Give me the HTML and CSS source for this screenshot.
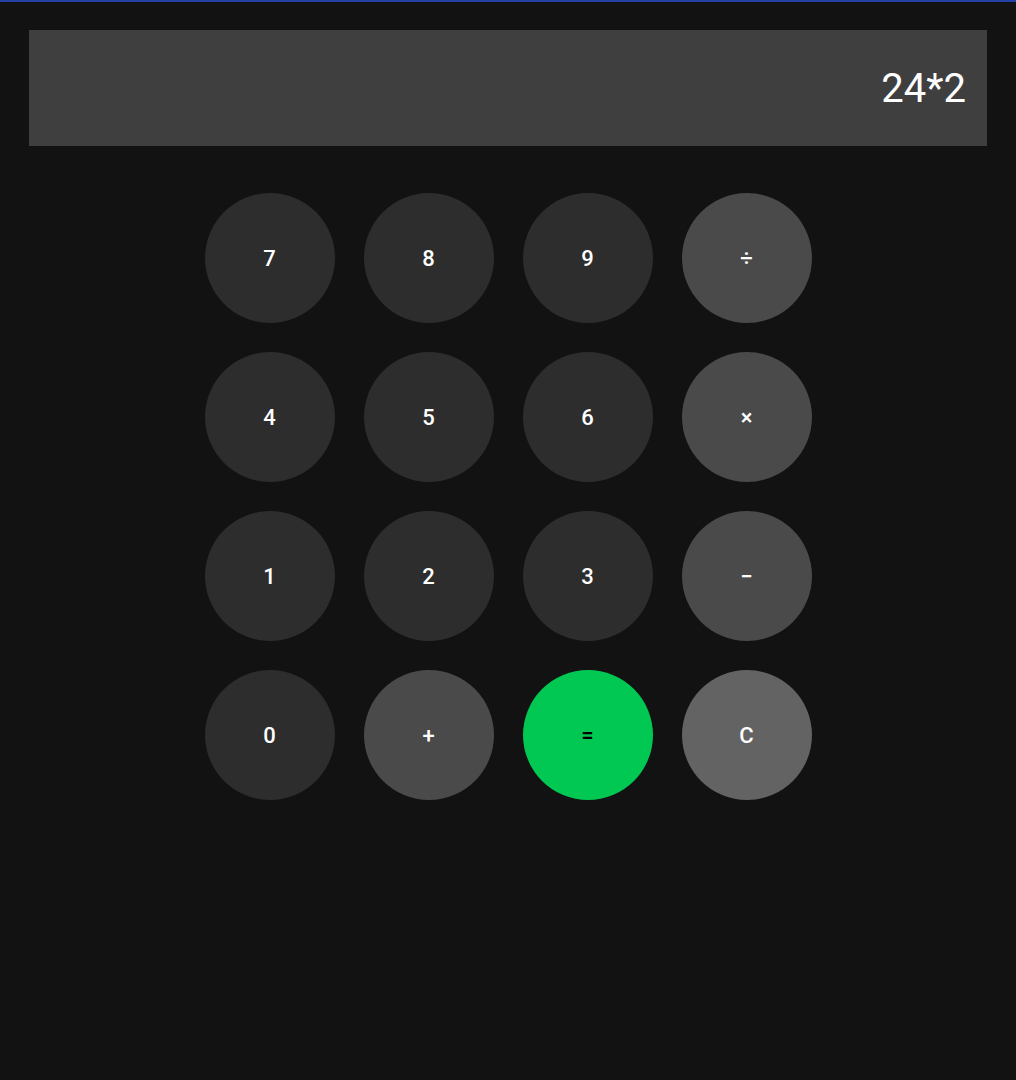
FILE: index.html
```html
<!DOCTYPE html>
<html lang="en">
<head>
<meta charset="utf-8">
<title>Calculator</title>
<link rel="stylesheet" href="styles.css">
</head>
<body>
<div class="topline"></div>
<main class="calc">
  <div class="display">24*2</div>
  <div class="keys">
    <button class="key num">7</button>
    <button class="key num">8</button>
    <button class="key num">9</button>
    <button class="key op">÷</button>
    <button class="key num">4</button>
    <button class="key num">5</button>
    <button class="key num">6</button>
    <button class="key op">×</button>
    <button class="key num">1</button>
    <button class="key num">2</button>
    <button class="key num">3</button>
    <button class="key op">−</button>
    <button class="key num">0</button>
    <button class="key op">+</button>
    <button class="key eq">=</button>
    <button class="key clear">C</button>
  </div>
</main>
</body>
</html>
```
FILE: styles.css
```css
html, body {
  margin: 0;
  padding: 0;
  background: #121212;
  height: 100%;
}
body {
  font-family: Roboto, "Noto Sans", "Liberation Sans", sans-serif;
  color: #fff;
}
.topline {
  height: 2px;
  background: #2541a8;
}
.calc {
  padding: 28px 29px 0;
}
.display {
  height: 116px;
  background: #3f3f3f;
  display: flex;
  align-items: center;
  justify-content: flex-end;
  padding: 0 21px;
  font-size: 40px;
  font-weight: 400;
  color: #fff;
}
.keys {
  margin: 47px auto 0;
  display: grid;
  grid-template-columns: repeat(4, 130px);
  grid-auto-rows: 130px;
  gap: 29px;
  justify-content: center;
}
.key {
  width: 130px;
  height: 130px;
  border: none;
  border-radius: 50%;
  font-family: Roboto, "Noto Sans", "Liberation Sans", sans-serif;
  font-size: 22px;
  font-weight: 500;
  color: #fff;
  padding: 0;
  display: flex;
  align-items: center;
  justify-content: center;
}
.num { background: #2d2d2d; }
.op { background: #4a4a4a; }
.clear { background: #636363; }
.eq { background: #00c853; color: #000; }
```
